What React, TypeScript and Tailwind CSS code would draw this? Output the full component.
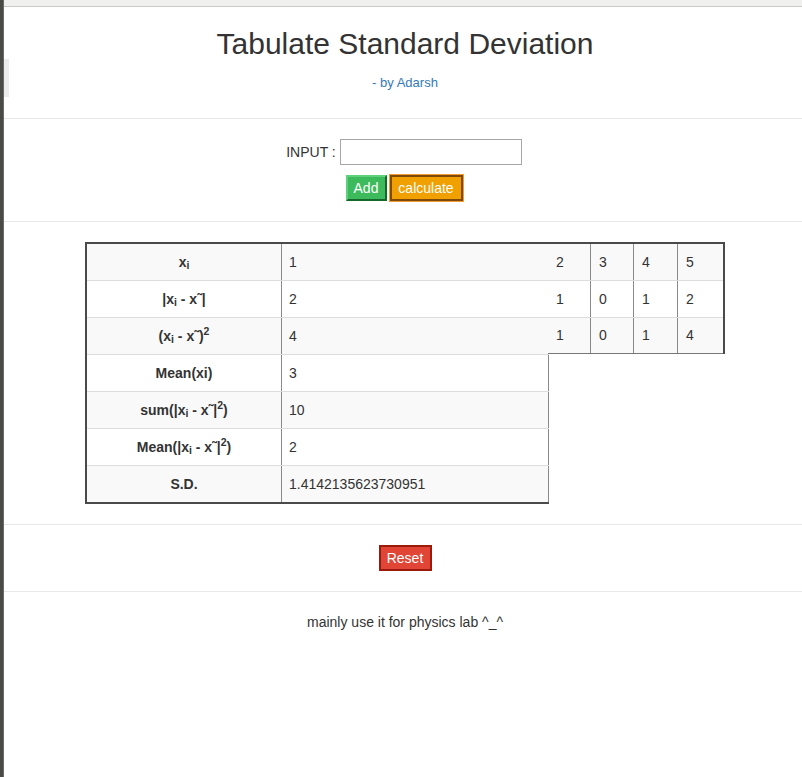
import React from 'react';

const font = "font-['Liberation_Sans',Arial,sans-serif]";

const Xi = () => (
  <>
    x<sub>i</sub>
  </>
);
const Xbar = () => <>x˜</>;

const App = () => {
  const top = [
    { label: <Xi />, values: ['1', '2', '3', '4', '5'] },
    {
      label: (
        <>
          |<Xi />&nbsp;- <Xbar />|
        </>
      ),
      values: ['2', '1', '0', '1', '2'],
    },
    {
      label: (
        <>
          (<Xi />&nbsp;- <Xbar />)<sup>2</sup>
        </>
      ),
      values: ['4', '1', '0', '1', '4'],
    },
  ];

  const bottom = [
    { label: <>Mean(xi)</>, value: '3' },
    {
      label: (
        <>
          sum(|<Xi />&nbsp;- <Xbar />|<sup>2</sup>)
        </>
      ),
      value: '10',
    },
    {
      label: (
        <>
          Mean(|<Xi />&nbsp;- <Xbar />|<sup>2</sup>)
        </>
      ),
      value: '2',
    },
    { label: <>S.D.</>, value: '1.4142135623730951' },
  ];

  const widths = ['w-[42px]', 'w-[43px]', 'w-[44px]', 'w-[46px]'];

  return (
    <div className={`min-h-screen flex bg-white text-[#333] ${font}`}>
      {/* left window edge */}
      <div className="w-[4px] shrink-0 bg-[#4a4a47] border-r border-[#6b6b66]" />

      <div className="flex-1 flex flex-col relative">
        <div className="h-[7px] bg-[#f0f0ef] border-b border-[#c9c9c9]" />
        <div className="absolute left-0 top-[59px] w-[5px] h-[38px] bg-[#ececec]" />

        {/* header */}
        <div className="h-[112px] border-b border-[#e8e8e8] flex flex-col items-center pl-[4px]">
          <h1 className="mt-[20px] text-[30px] leading-[33px] font-normal">Tabulate Standard Deviation</h1>
          <a className="mt-[14px] text-[13px] leading-[18px] text-[#337ab7]">- by Adarsh</a>
        </div>

        {/* input */}
        <div className="h-[103px] border-b border-[#e8e8e8] flex flex-col items-center pt-[20px] pl-[2px]">
          <div className="flex items-center gap-[4px] text-[14px]">
            <span>INPUT :</span>
            <input className="w-[182px] h-[26px] border border-[#a6a6a6] bg-white outline-none" />
          </div>
          <div className="mt-[10px] flex gap-[3px] text-[14px]">
            <button className="h-[26px] w-[41px] bg-[#3cba5c] text-white border-2 border-t-[#5fd07c] border-l-[#5fd07c] border-b-[#16672b] border-r-[#16672b]">
              Add
            </button>
            <button className="h-[26px] w-[73px] bg-[#f0a000] text-white border-2 border-[#7d4a0a] outline outline-[1px] outline-[#f29a3a]">
              calculate
            </button>
          </div>
        </div>

        {/* table */}
        <div className="h-[303px] border-b border-[#e8e8e8] pt-[20px] pl-[81px] text-[14px]">
          <div className="flex">
            <div className="flex flex-col border-l-2 border-t-2 border-b-2 border-[#4a4a4a]">
              {top.map((r, i) => (
                <div key={i} className={`flex ${i === 0 ? 'h-[36px]' : 'h-[37px] border-t border-[#dddddd]'} ${i % 2 === 0 ? 'bg-[#f9f9f9]' : 'bg-white'}`}>
                  <div className="w-[195px] border-r border-[#8a8a8a] flex items-center justify-center font-bold">{r.label}</div>
                  <div className="w-[267px] border-r border-[#8a8a8a] flex items-center pl-[7px]">{r.values[0]}</div>
                </div>
              ))}
              {bottom.map((r, i) => (
                <div key={i} className={`flex h-[37px] ${i % 2 === 1 ? 'bg-[#f9f9f9]' : 'bg-white'} border-t border-[#dddddd]`}>
                  <div className="w-[195px] border-r border-[#8a8a8a] flex items-center justify-center font-bold">{r.label}</div>
                  <div className="w-[267px] border-r border-[#8a8a8a] flex items-center pl-[7px]">{r.value}</div>
                </div>
              ))}
            </div>
            <div className="flex flex-col self-start border-t-2 border-r-2 border-[#4a4a4a] -ml-px">
              {top.map((r, i) => (
                <div key={i} className={`flex ${i === 0 ? 'h-[36px]' : 'h-[37px] border-t border-[#dddddd]'} ${i % 2 === 0 ? 'bg-[#f9f9f9]' : 'bg-white'} ${i === 2 ? 'border-b border-b-[#777]' : ''}`}>
                  {r.values.slice(1).map((v, j) => (
                    <div key={j} className={`${widths[j]} ${j > 0 ? 'border-l border-[#8a8a8a]' : ''} flex items-center pl-[8px]`}>
                      {v}
                    </div>
                  ))}
                </div>
              ))}
            </div>
          </div>
        </div>

        {/* reset */}
        <div className="h-[67px] border-b border-[#e8e8e8] flex justify-center pt-[20px] pl-[4px]">
          <button className="h-[26px] w-[53px] bg-[#e04535] text-white text-[14px] border-2 border-[#9c1a0c]">Reset</button>
        </div>

        <div className="pt-[20px] pl-[4px] text-center text-[14px] leading-[20px]">mainly use it for physics lab ^_^</div>
      </div>
    </div>
  );
};

export default App;
